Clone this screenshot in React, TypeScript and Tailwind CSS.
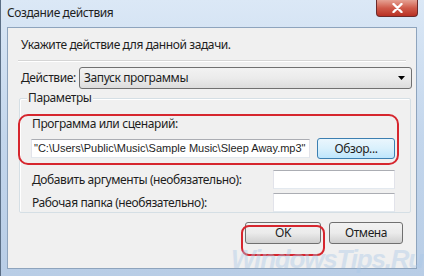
import React from "react";

function Button({ label, focused, className }: { label: string; focused?: boolean; className?: string }) {
  return (
    <div
      className={`flex items-center justify-center h-[21px] rounded-[3px] border border-solid text-[12px] text-[#1e1e1e] ${
        focused
          ? "border-[#3c7fb1] bg-gradient-to-b from-[#eaf6fd] via-[#d9f0fc] to-[#bee6fd]"
          : "border-[#707070] bg-gradient-to-b from-[#f2f2f2] via-[#ebebeb] to-[#cfcfcf]"
      } ${className ?? ""}`}
    >
      {label}
    </div>
  );
}

function Field({ className, children }: { className?: string; children?: React.ReactNode }) {
  return (
    <div
      className={`flex items-center h-[19px] bg-white border border-solid border-t-[#abadb3] border-x-[#e2e3ea] border-b-[#e3e9ef] px-[3px] text-[12px] text-[#1e1e1e] whitespace-nowrap overflow-hidden ${className ?? ""}`}
    >
      {children}
    </div>
  );
}

export default function App() {
  return (
    <div
      className="relative w-[424px] h-[276px] overflow-hidden flex flex-col bg-gradient-to-b from-[#dbe8f6] via-[#c3d6ec] to-[#b8cde6] border-l border-[#5b6f86] tracking-[-0.4px]"
      style={{ fontFamily: '"Noto Sans", "Open Sans", sans-serif' }}
    >
      {/* title bar */}
      <div className="relative flex items-center h-[27px] pl-[6px] shrink-0">
        <span className="text-[12px] text-[#1e1e1e] leading-none pb-[1px]">Создание действия</span>
        <div className="absolute left-[375px] top-0 w-[42px] h-[17px] rounded-b-[4px] border border-t-0 border-[#6b2a2a] bg-gradient-to-b from-[#e5a193] via-[#cf5a4a] to-[#b82f22] flex items-center justify-center">
          <svg width="11" height="10" viewBox="0 0 11 10">
            <path d="M1.5 1 L9.5 9 M9.5 1 L1.5 9" stroke="#ffffff" strokeWidth="2.4" strokeLinecap="round" />
          </svg>
        </div>
      </div>

      {/* client area */}
      <div className="relative ml-[6px] w-[410px] h-[242px] bg-[#f0f0f0] border border-[#8ea4bd] flex flex-col text-[12px] text-[#1e1e1e]">
        <div className="pl-[13px] pt-[9px] leading-[16px]">Укажите действие для данной задачи.</div>

        <div className="ml-[10px] mt-[7px] w-[388px] h-[2px] border-t border-[#d5d5d5] border-b border-b-white" />

        <div className="flex items-center mt-[5px] pl-[13px]">
          <span className="w-[58px] leading-[16px]">Действие:</span>
          <div className="flex items-center justify-between w-[333px] h-[22px] rounded-[3px] border border-[#707070] bg-gradient-to-b from-[#f2f2f2] via-[#ebebeb] to-[#dcdcdc] pl-[4px] pr-[6px]">
            <span>Запуск программы</span>
            <svg width="7" height="4" viewBox="0 0 7 4">
              <path d="M0 0 H7 L3.5 4 Z" fill="#000" />
            </svg>
          </div>
        </div>

        {/* group box */}
        <div className="relative ml-[11px] mt-[1px] w-[392px] h-[123px] flex flex-col">
          <div className="absolute left-0 right-0 top-[8px] bottom-0 border border-[#d5dfe5] rounded-[2px] shadow-[inset_1px_1px_0_#ffffff]" />
          <span className="relative self-start ml-[8px] px-[1px] bg-[#f0f0f0] leading-[16px]">Параметры</span>

          <div className="relative flex flex-col pl-[12px] mt-[10px]">
            <span className="pl-[1px] leading-[16px]">Программа или сценарий:</span>
            <div className="flex items-center mt-[6px]">
              <Field className="w-[279px] pl-[2px]">
                <span className="text-[11px] tracking-normal" style={{ fontFamily: '"Liberation Sans", Arial, sans-serif' }}>
                  "C:\Users\Public\Music\Sample Music\Sleep Away.mp3"
                </span>
              </Field>
              <Button label="Обзор..." focused className="ml-[7px] w-[78px] h-[19px]" />
            </div>
          </div>

          <div className="relative flex items-center justify-between pl-[13px] pr-[16px] mt-[11px]">
            <span className="leading-[16px]">Добавить аргументы (необязательно):</span>
            <Field className="w-[122px]" />
          </div>
          <div className="relative flex items-center justify-between pl-[13px] pr-[16px] mt-[4px]">
            <span className="leading-[16px]">Рабочая папка (необязательно):</span>
            <Field className="w-[122px]" />
          </div>
        </div>

        <div className="flex justify-end gap-[8px] pr-[13px] mt-[9px]">
          <Button label="OK" className="w-[76px] h-[22px]" />
          <Button label="Отмена" className="w-[74px] h-[22px]" />
        </div>
      </div>

      {/* red annotation marks */}
      <div className="absolute left-[17px] top-[114px] w-[381px] h-[51px] rounded-[10px] border-2 border-[#d6262e]" />
      <div className="absolute left-[240px] top-[225px] w-[84px] h-[31px] rounded-[8px] border-2 border-[#d6262e]" />

      {/* watermark */}
      <div
        className="absolute left-[230px] top-[246px] text-[26px] font-bold italic tracking-[-1.2px] text-[#a9c8e8] opacity-40 whitespace-nowrap leading-none pointer-events-none"
        style={{ fontFamily: '"Liberation Sans", sans-serif' }}
      >
        WindowsTips.Ru
      </div>
    </div>
  );
}
